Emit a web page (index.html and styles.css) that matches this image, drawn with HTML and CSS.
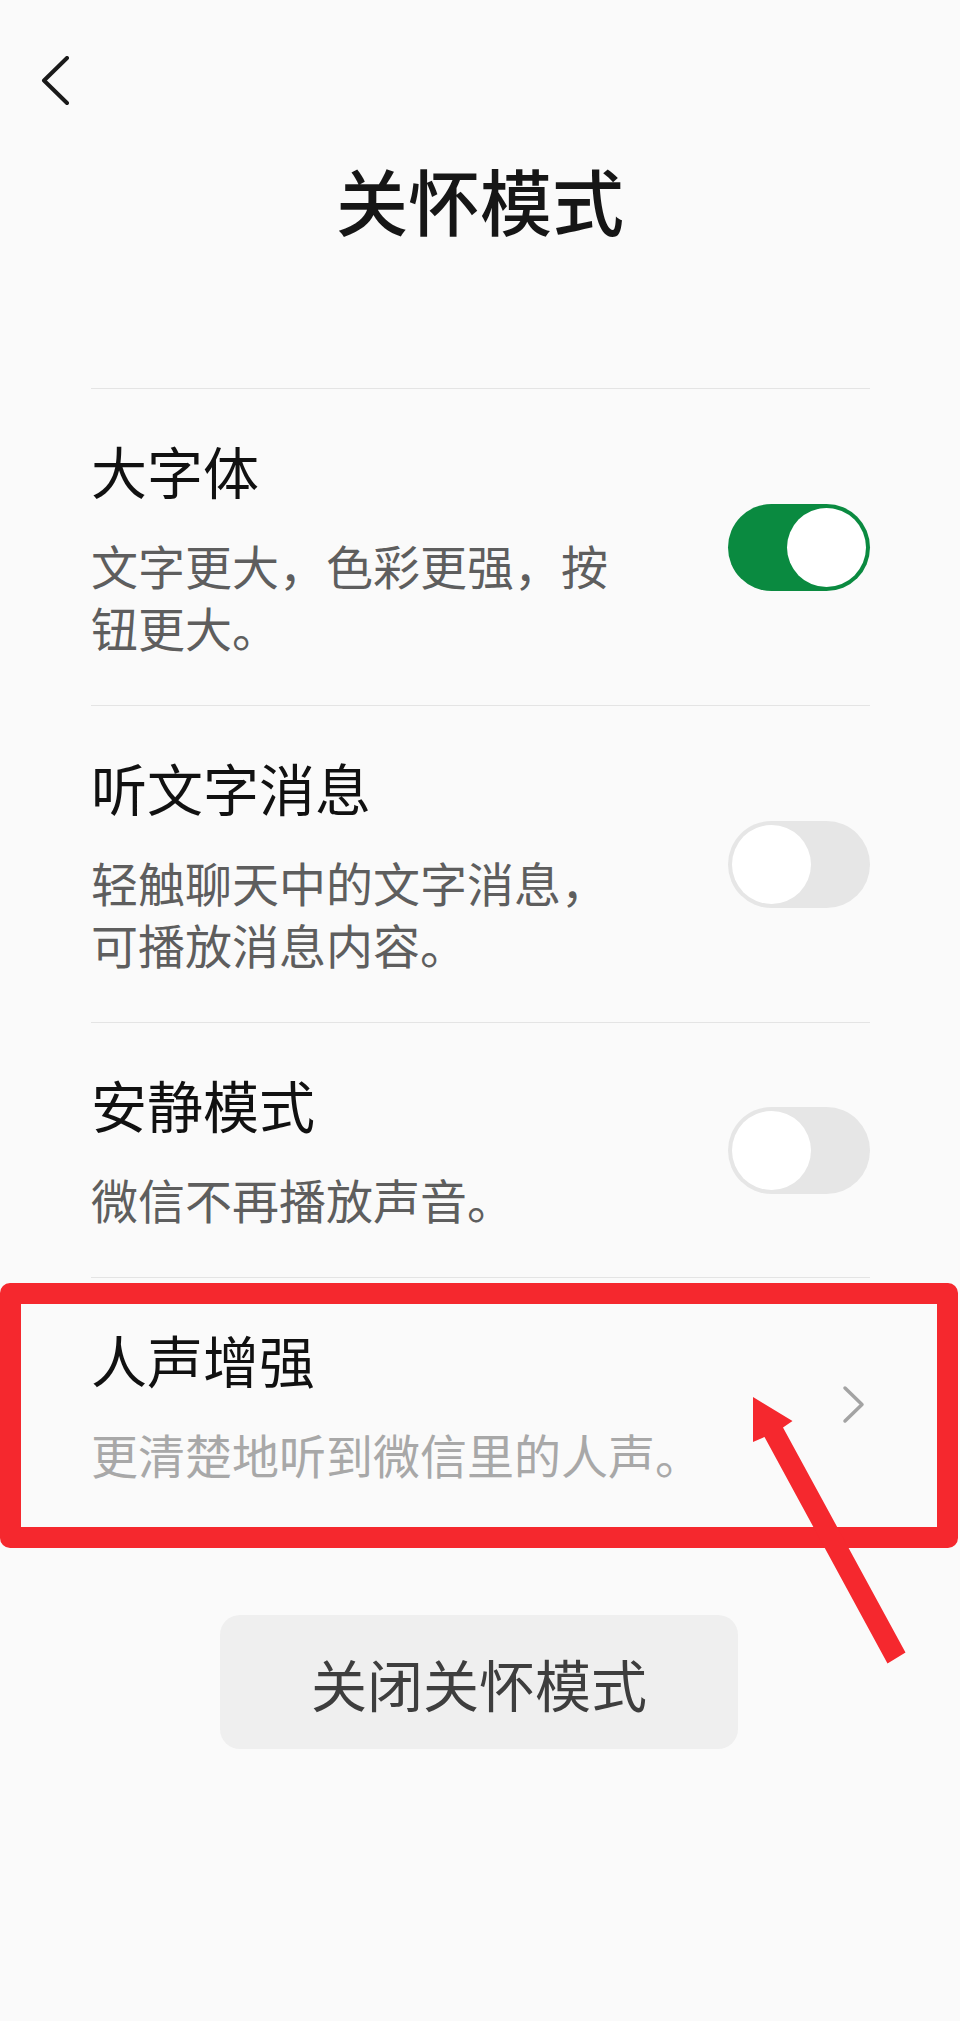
FILE: index.html
```html
<!DOCTYPE html>
<html lang="zh-CN">
<head>
<meta charset="utf-8">
<title>关怀模式</title>
<link rel="stylesheet" href="styles.css">
</head>
<body>
<div class="page">
  <header class="topbar">
    <svg class="back" width="30" height="50" viewBox="0 0 30 50" aria-label="返回">
      <polyline points="26,2 3,24.5 26,47" fill="none" stroke="#1a1a1a" stroke-width="4" stroke-linecap="round" stroke-linejoin="round"/>
    </svg>
  </header>
  <h1 class="title">关怀模式</h1>

  <ul class="list">
    <li class="row">
      <div class="text">
        <div class="row-title">大字体</div>
        <div class="row-desc">文字更大，色彩更强，按钮更大。</div>
      </div>
      <div class="switch on"><span class="knob"></span></div>
    </li>
    <li class="row">
      <div class="text">
        <div class="row-title">听文字消息</div>
        <div class="row-desc">轻触聊天中的文字消息，可播放消息内容。</div>
      </div>
      <div class="switch"><span class="knob"></span></div>
    </li>
    <li class="row">
      <div class="text">
        <div class="row-title">安静模式</div>
        <div class="row-desc">微信不再播放声音。</div>
      </div>
      <div class="switch"><span class="knob"></span></div>
    </li>
    <li class="row row-link">
      <div class="text">
        <div class="row-title">人声增强</div>
        <div class="row-desc light">更清楚地听到微信里的人声。</div>
      </div>
      <svg class="chevron" width="24" height="40" viewBox="0 0 24 40">
        <polyline points="4,3 21,19.5 4,36" fill="none" stroke="#a3a3a3" stroke-width="3.5" stroke-linecap="round" stroke-linejoin="round"/>
      </svg>
      <div class="highlight"></div>
      <svg class="arrow" width="180" height="290" viewBox="0 0 180 290">
        <polygon points="13,6 52.5,30 43,36.5 165.5,261.5 147.5,272.5 24.5,46 13,51" fill="#f5282e"/>
      </svg>
    </li>
  </ul>

  <div class="actions">
    <button class="close-btn">关闭关怀模式</button>
  </div>
</div>
</body>
</html>
```

FILE: styles.css
```css
html, body {
  margin: 0;
  padding: 0;
  background: #fafafa;
}
body {
  font-family: "Noto Sans CJK SC", "Noto Sans", sans-serif;
  color: #141414;
  width: 960px;
  min-height: 2021px;
}
.page {
  position: relative;
}
.topbar {
  height: 154px;
  padding: 56px 0 0 41px;
  box-sizing: border-box;
}
.back {
  display: block;
}
.title {
  margin: 0;
  font-size: 72px;
  line-height: 90px;
  font-weight: 500;
  text-align: center;
  color: #161616;
  letter-spacing: 0;
}
.list {
  list-style: none;
  margin: 144px 90px 0 91px;
  padding: 0;
}
.row {
  display: flex;
  align-items: center;
  gap: 80px;
  border-top: 1px solid #e4e4e4;
  padding: 47px 0 47px 0;
  position: relative;
}
.text {
  flex: 1;
  min-width: 0;
}
.row-title {
  font-size: 56px;
  line-height: 68px;
  font-weight: 400;
  color: #111111;
}
.row-desc {
  margin-top: 30px;
  font-size: 47px;
  line-height: 62px;
  color: #5e5e5e;
}
.row-desc.light {
  color: #a8a8a8;
}
.switch {
  flex: none;
  width: 142px;
  height: 87px;
  border-radius: 44px;
  background: #e6e6e6;
  padding: 4px;
  box-sizing: border-box;
  display: flex;
  justify-content: flex-start;
}
.switch.on {
  background: #0a8a40;
  justify-content: flex-end;
}
.knob {
  width: 79px;
  height: 79px;
  border-radius: 50%;
  background: #ffffff;
}
.chevron {
  flex: none;
  margin-right: 5px;
  display: block;
}
.highlight {
  position: absolute;
  left: -91px;
  right: -88px;
  top: 5px;
  bottom: -16px;
  border: 21px solid #f5282e;
  border-radius: 10px;
  pointer-events: none;
}
.arrow {
  position: absolute;
  left: 649px;
  top: 113px;
  display: block;
  pointer-events: none;
}
.actions {
  display: flex;
  justify-content: center;
  padding-top: 83px;
  padding-right: 2px;
}
.close-btn {
  width: 518px;
  height: 134px;
  border: none;
  border-radius: 20px;
  background: #efefef;
  font-family: "Noto Sans CJK SC", "Noto Sans", sans-serif;
  font-size: 56px;
  color: #3e3e3e;
  font-weight: 400;
  padding: 0;
}
```
